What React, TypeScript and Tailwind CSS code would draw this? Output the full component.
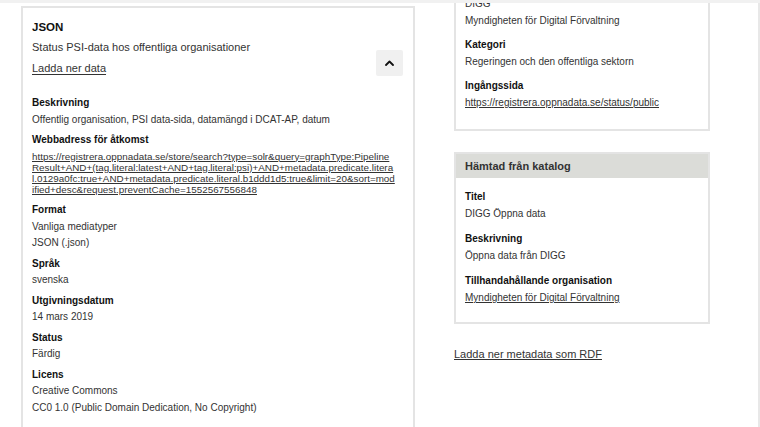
import { ReactNode } from "react"

type Field = { label: string; values: ReactNode[] }

const leftFields: Field[] = [
  { label: "Beskrivning", values: ["Offentlig organisation, PSI data-sida, datamängd i DCAT-AP, datum"] },
  { label: "Format", values: ["Vanliga mediatyper", "JSON (.json)"] },
  { label: "Språk", values: ["svenska"] },
  { label: "Utgivningsdatum", values: ["14 mars 2019"] },
  { label: "Status", values: ["Färdig"] },
  { label: "Licens", values: ["Creative Commons", "CC0 1.0 (Public Domain Dedication, No Copyright)"] },
]

const accessUrl =
  "https://registrera.oppnadata.se/store/search?type=solr&query=graphType:PipelineResult+AND+(tag.literal:latest+AND+tag.literal:psi)+AND+metadata.predicate.literal.0129a0fc:true+AND+metadata.predicate.literal.b1ddd1d5:true&limit=20&sort=modified+desc&request.preventCache=1552567556848"

function LeftField({ label, values }: Field) {
  return (
    <div>
      <div className="text-[10px] font-bold leading-[16.5px] text-[#111]">{label}</div>
      {values.map((v, i) => (
        <div key={i} className="text-[10px] leading-[16.5px] text-[#333]">
          {v}
        </div>
      ))}
    </div>
  )
}

function RightField({ label, children }: { label: string; children: ReactNode }) {
  return (
    <div>
      <div className="text-[10px] font-bold leading-[17px] text-[#111]">{label}</div>
      <div className="text-[10px] leading-[17px] text-[#333]">{children}</div>
    </div>
  )
}

function ChevronUp() {
  return (
    <svg width="9" height="6" viewBox="0 0 9 6" fill="none">
      <path d="M1 5L4.5 1.5L8 5" stroke="#111" strokeWidth="1.8" strokeLinecap="round" strokeLinejoin="round" />
    </svg>
  )
}

export default function App() {
  return (
    <div className="h-[427px] w-[760px] overflow-hidden bg-white font-['Liberation_Sans',Arial,sans-serif] text-[#333]">
      <div className="h-[3px] bg-[#f1f1f1]" />
      <div className="flex h-[424px] w-[760px] overflow-hidden border-r-2 border-[#e8e8e8]">
        {/* distribution card */}
        <div className="ml-[21px] mt-[3px] w-[394px] self-start border-2 border-[#e4e4e4] pb-6 pl-[9px] pr-[10px] pt-[11px]">
          <div className="flex items-end justify-between">
            <div>
              <div className="text-[11.5px] font-bold leading-4 text-[#111]">JSON</div>
              <div className="mt-[4px] text-[11px] leading-4 text-[#333]">Status PSI-data hos offentliga organisationer</div>
              <a className="mt-[5px] block text-[11px] leading-4 text-[#333] underline underline-offset-2">
                Ladda ner data
              </a>
            </div>
            <button className="flex h-[26px] w-[27px] items-center justify-center rounded-[2px] bg-[#f0f0f0]">
              <ChevronUp />
            </button>
          </div>

          <div className="mt-[19px] flex flex-col gap-[4px]">
            <LeftField {...leftFields[0]} />
            <div>
              <div className="text-[10px] font-bold leading-[16.5px] text-[#111]">Webbadress för åtkomst</div>
              <a className="mb-[3px] mt-[2px] block w-[363px] break-all text-[9.85px] leading-[11.2px] text-[#333] underline">
                {accessUrl}
              </a>
            </div>
            {leftFields.slice(1).map((f) => (
              <LeftField key={f.label} {...f} />
            ))}
          </div>
        </div>

        {/* right column */}
        <div className="ml-[39px] flex w-[256px] flex-col">
          <div className="-mt-[19px] border-2 border-[#e4e4e4] pb-[18px] pl-[9px] pr-[9px] pt-[9px]">
            <div className="flex flex-col gap-[7px]">
              <div>
                <div className="text-[10px] leading-[17px] text-[#333]">DIGG</div>
                <div className="text-[10px] leading-[17px] text-[#333]">Myndigheten för Digital Förvaltning</div>
              </div>
              <RightField label="Kategori">Regeringen och den offentliga sektorn</RightField>
              <RightField label="Ingångssida">
                <a className="underline">https://registrera.oppnadata.se/status/public</a>
              </RightField>
            </div>
          </div>

          <div className="mt-[21px] border-2 border-[#e4e4e4]">
            <div className="flex h-[24px] items-center bg-[#dbdcd8] px-[9px] text-[11px] font-bold text-[#333]">
              Hämtad från katalog
            </div>
            <div className="flex flex-col gap-2 pb-4 pl-[9px] pr-[9px] pt-[10px]">
              <RightField label="Titel">DIGG Öppna data</RightField>
              <RightField label="Beskrivning">Öppna data från DIGG</RightField>
              <RightField label="Tillhandahållande organisation">
                <a className="underline">Myndigheten för Digital Förvaltning</a>
              </RightField>
            </div>
          </div>

          <a className="mt-[22px] block text-[11px] leading-4 text-[#333] underline">
            Ladda ner metadata som RDF
          </a>
        </div>
      </div>
    </div>
  )
}
